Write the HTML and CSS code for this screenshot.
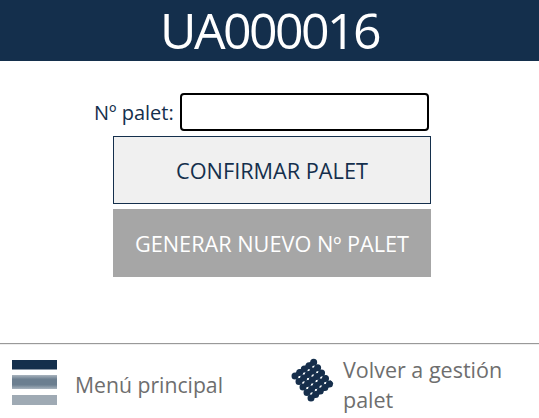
FILE: index.html
```html
<!DOCTYPE html>
<html lang="es">

<head>
    <meta charset="UTF-8">
    <meta name="viewport" content="width=device-width, initial-scale=1.0">
    <title>Palet</title>
    <link rel="stylesheet" href="styles.css">
</head>

<body>

    <div class="header">UA000016</div>

    <!-- formulario -->
    <div class="form-container">
        <div class="field-row">
            <label for="palet">Nº palet:</label>
            <input type="text" id="palet" class="field-input">
        </div>
        <button class="btn btn-confirm">CONFIRMAR PALET</button>
        <button class="btn btn-generate">GENERAR NUEVO Nº PALET</button>
    </div>

    <!-- pie de página -->
    <div class="footer">
        <a class="footer-link footer-menu">
            <svg class="footer-icon" width="45" height="45" viewBox="0 0 45 45">
                <defs>
                    <linearGradient id="midBar" x1="0" y1="0" x2="0" y2="1">
                        <stop offset="0" stop-color="#a9b4be"/>
                        <stop offset="0.3" stop-color="#6c7f90"/>
                        <stop offset="0.7" stop-color="#6c7f90"/>
                        <stop offset="1" stop-color="#a9b4be"/>
                    </linearGradient>
                    <filter id="soft">
                        <feGaussianBlur stdDeviation="0.45"/>
                    </filter>
                </defs>
                <rect x="0" y="0" width="45" height="9.5" fill="#142f4c"/>
                <rect x="0" y="15" width="45" height="14" fill="url(#midBar)"/>
                <rect x="0" y="35" width="45" height="10" fill="#9faab4"/>
            </svg>
            <span>Menú principal</span>
        </a>
        <a class="footer-link footer-back">
            <svg class="footer-icon" width="45" height="45" viewBox="0 0 45 45">
                <g fill="none" stroke="#142f4c" filter="url(#soft)">
                    <g stroke-width="4.6">
                        <path d="M4 18 L23 4"/>
                        <path d="M8 23.5 L27.5 9"/>
                        <path d="M12 29 L32 14"/>
                        <path d="M16 34.5 L36.5 19"/>
                        <path d="M20 40 L41 24"/>
                    </g>
                    <g stroke-width="7" stroke-linecap="round" stroke-dasharray="0 5.8">
                        <path d="M4 18 L23 4"/>
                        <path d="M8 23.5 L27.5 9"/>
                        <path d="M12 29 L32 14"/>
                        <path d="M16 34.5 L36.5 19"/>
                        <path d="M20 40 L41 24"/>
                    </g>
                </g>
            </svg>
            <span>Volver a gestión palet</span>
        </a>
    </div>

</body>

</html>
```

FILE: styles.css
```css
body {
    font-family: 'Open Sans', sans-serif;
    margin: 0;
    padding: 0;
    background-color: #fff;
    height: 418px;
    overflow: hidden;
    display: flex;
    flex-direction: column;
}

.header {
    height: 61px;
    background-color: #142f4c;
    color: #fff;
    font-size: 50px;
    line-height: 61px;
    text-align: center;
    letter-spacing: -2.6px;
}

.form-container {
    flex: 1;
    width: 318px;
    margin-left: 113px;
    padding-top: 32px;
    display: flex;
    flex-direction: column;
    align-items: flex-start;
}

.field-row {
    display: flex;
    align-items: center;
    gap: 6px;
    margin-left: -19px;
    margin-bottom: 5px;
}

.field-row label {
    font-size: 20px;
    color: #142f4c;
}

.field-input {
    width: 249px;
    height: 38px;
    box-sizing: border-box;
    border: 2px solid #000;
    border-radius: 4px;
    padding: 0 6px;
    background-color: #fff;
}

.btn {
    width: 318px;
    height: 68px;
    font-family: 'Open Sans', sans-serif;
    font-size: 21.7px;
    padding: 0;
}

.btn-confirm {
    background-color: #f0f0f0;
    color: #142f4c;
    border: 1px solid #142f4c;
    margin-bottom: 5px;
}

.btn-generate {
    background-color: #a6a6a6;
    color: #fff;
    border: none;
}

.footer {
    height: 74px;
    border-top: 1px solid #999;
    box-shadow: inset 0 1px 0 #eee;
    display: flex;
    color: #6e6e6e;
    font-size: 21.2px;
    line-height: 30px;
}

.footer-link {
    display: flex;
    align-items: flex-start;
}

.footer-menu {
    width: 291px;
    padding-left: 12px;
    padding-top: 16px;
    box-sizing: border-box;
    gap: 18px;
}

.footer-menu span {
    margin-top: 10px;
}

.footer-back {
    flex: 1;
    gap: 7px;
    padding-top: 14px;
    padding-right: 20px;
    font-size: 21.5px;
}

.footer-back span {
    margin-top: -3px;
}

.footer-icon {
    flex-shrink: 0;
}
```
